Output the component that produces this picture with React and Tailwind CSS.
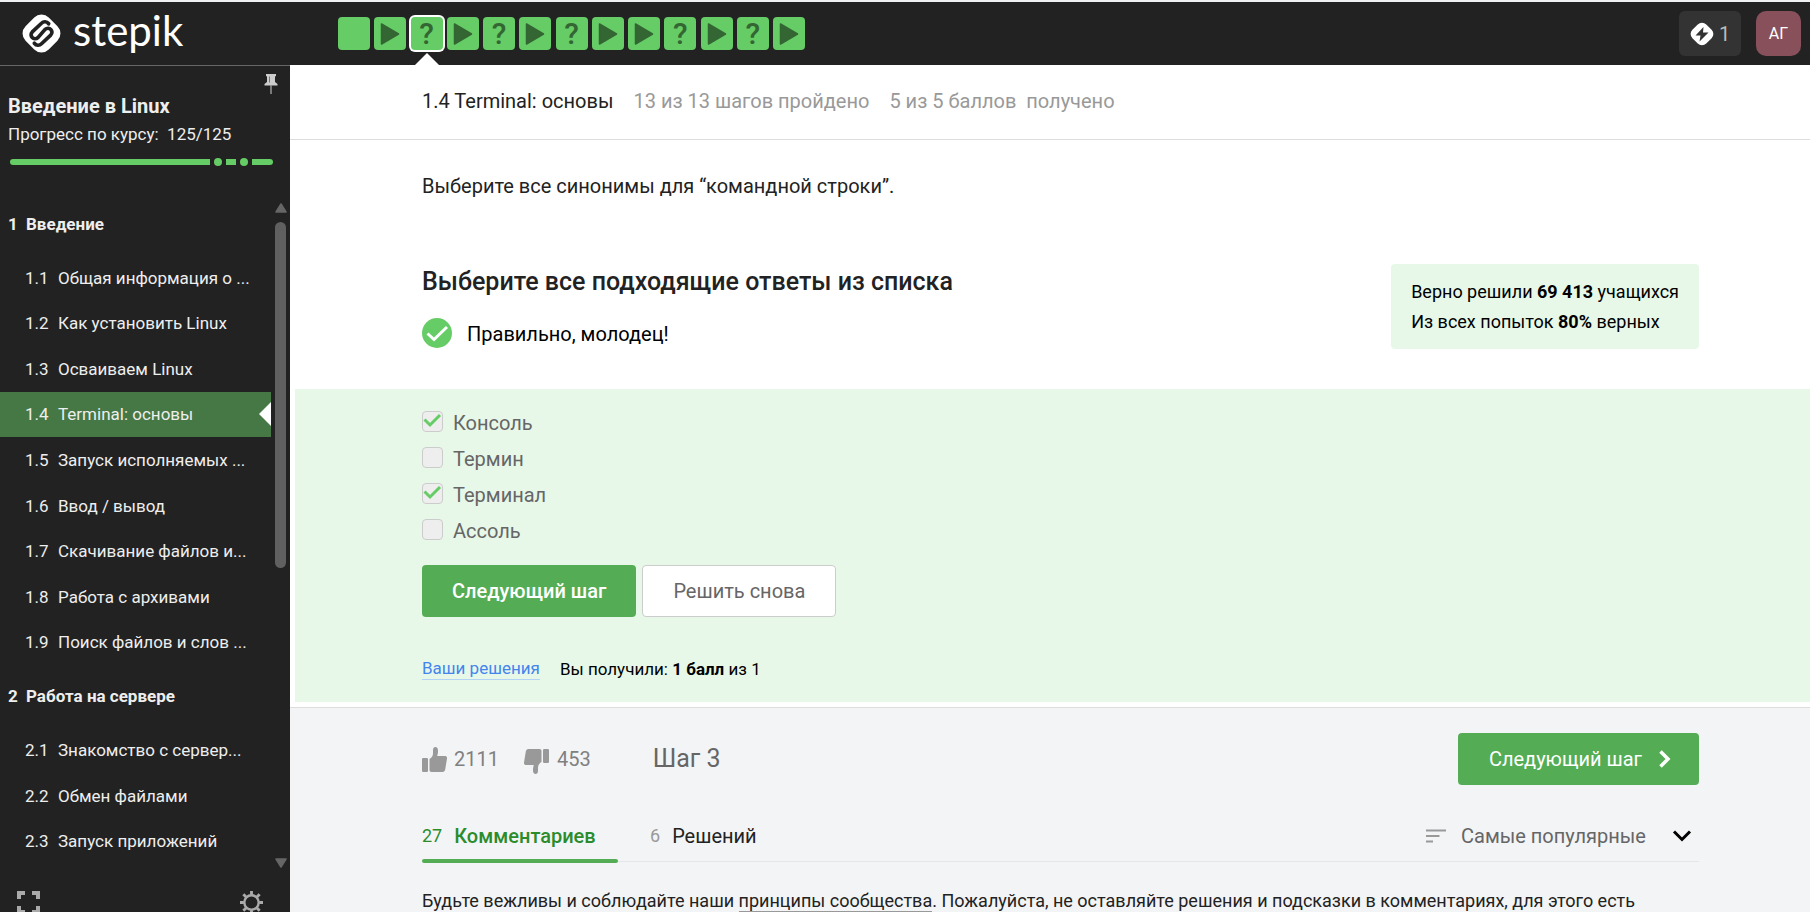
import React, { useState } from "react";

const steps = ["text", "video", "quiz", "video", "quiz", "video", "quiz", "video", "video", "quiz", "video", "quiz", "video"];

const sections = [
  {
    id: "1",
    title: "Введение",
    listClass: "h-[410px]",
    lessons: [
      ["1.1", "Общая информация о ..."],
      ["1.2", "Как установить Linux"],
      ["1.3", "Осваиваем Linux"],
      ["1.4", "Terminal: основы"],
      ["1.5", "Запуск исполняемых ..."],
      ["1.6", "Ввод / вывод"],
      ["1.7", "Скачивание файлов и..."],
      ["1.8", "Работа с архивами"],
      ["1.9", "Поиск файлов и слов ..."],
    ],
  },
  {
    id: "2",
    title: "Работа на сервере",
    listClass: "h-[137px]",
    lessons: [
      ["2.1", "Знакомство с сервер..."],
      ["2.2", "Обмен файлами"],
      ["2.3", "Запуск приложений"],
    ],
  },
];

function LogoMark() {
  return (
    <svg viewBox="0 0 40 40" className="size-[41px]" aria-hidden="true">
      <rect x="4" y="4" width="32" height="32" rx="10" transform="rotate(45 20 20)" fill="#fff" />
      <path
        d="M27 10.500C25 8 22 8 20 10L11 18.500C7.500 22 12.500 27.500 16.500 24L23.500 16C27.500 12.500 32.500 18 29 21.500L20 30C18 32 15 32 13 29.500"
        fill="none"
        stroke="#222"
        strokeWidth="3.600"
        strokeLinecap="round"
        strokeLinejoin="round"
      />
    </svg>
  );
}

function PlayIcon() {
  return (
    <svg viewBox="0 0 20 24" className="h-6 w-5" aria-hidden="true">
      <path d="M1.500 2v20L18.500 12z" fill="#363" stroke="#363" strokeWidth="1.500" strokeLinejoin="round" />
    </svg>
  );
}

function BoltIcon() {
  return (
    <svg viewBox="0 0 26 26" className="size-[26px]" aria-hidden="true">
      <rect x="3.200" y="3.200" width="19.600" height="19.600" rx="6" transform="rotate(45 13 13)" fill="#fff" />
      <path d="M14.500 6 6.500 14.500h5L10.500 20.500l9-9h-5.500z" fill="#333" />
    </svg>
  );
}

function ThumbIcon({ down }) {
  return (
    <svg viewBox="0 0 25 25" className={down ? "mt-1 size-[25px] rotate-180" : "size-[25px]"} aria-hidden="true">
      <rect x="0" y="11" width="6" height="14" rx="1.200" fill="#999" />
      <path
        d="M7.500 12c2-1 3.500-3 3.500-5.500V3C11 1 12 0 13.500 0S16 1.500 16 3.500c0 2.500-.3 4-.8 5.500h7.600c1.600 0 2.500 1 2.200 2.600l-1.800 11c-.3 1.500-1.200 2.400-2.600 2.400H9.500c-1.200 0-2-.8-2-2z"
        fill="#999"
      />
    </svg>
  );
}

function Lesson({ number, title, active }) {
  return (
    <li className={active ? "relative flex min-h-0 flex-1 bg-[#457844]" : "relative flex min-h-0 flex-1"}>
      <a href="#lesson" className="flex min-w-0 flex-1 items-center gap-2 pl-[25px]">
        <span className="w-[25px] shrink-0">{number}</span>
        <span className="whitespace-nowrap">{title}</span>
      </a>
      {active && (
        <svg viewBox="0 0 12 24" className="absolute top-1/2 right-0 h-6 w-3 -translate-y-1/2" aria-hidden="true">
          <path d="M12 0v24L0 12z" fill="#fff" />
        </svg>
      )}
    </li>
  );
}

function Sidebar() {
  return (
    <aside className="flex w-[290px] shrink-0 flex-col border-t border-[#666] bg-[#222] text-[17px] leading-6 text-[#eee]">
      <div className="flex justify-end pt-2 pr-3">
        <button type="button" aria-label="Закрепить" className="h-5">
          <svg viewBox="0 0 14 20" className="h-5 w-3.5" aria-hidden="true">
            <path d="M2 0h10v2l-1 .5V8l2.500 2v1.500H.5V10L3 8V2.500L2 2z" fill="#ccc" />
            <path d="M5.500 2.500v6" stroke="#777" />
            <path d="M7 11v9" stroke="#999" strokeWidth="1.500" />
          </svg>
        </button>
      </div>
      <div className="px-2">
        <h2 className="text-xl leading-6 font-bold">Введение в Linux</h2>
        <p className="mt-1 whitespace-pre">Прогресс по курсу:  125/125</p>
        <div className="mt-3 ml-0.5 flex items-center" role="img" aria-label="Прогресс">
          <span className="h-1.5 w-[200px] rounded-l-full bg-[#6c6]" />
          <span className="ml-1 size-2 rounded-full bg-[#6c6]" />
          <span className="ml-1 h-1.5 w-2.5 bg-[#6c6]" />
          <span className="ml-1 size-2 rounded-full bg-[#6c6]" />
          <span className="ml-1 h-1.5 w-[21px] rounded-r-full bg-[#6c6]" />
        </div>
      </div>
      <div className="mt-[27px] flex min-h-0 flex-1">
        <nav className="min-w-0 flex-1 overflow-hidden">
          {sections.map((section) => (
            <section key={section.id}>
              <h3 className="flex h-[62px] items-center gap-2 pl-2 font-bold">
                <span className="w-2.5">{section.id}</span>
                {section.title}
              </h3>
              <ul className={"flex flex-col " + section.listClass}>
                {section.lessons.map(([number, title]) => (
                  <Lesson key={number} number={number} title={title} active={number === "1.4"} />
                ))}
              </ul>
            </section>
          ))}
        </nav>
        <div className="flex w-[19px] flex-col items-center pt-2.5" aria-hidden="true">
          <svg viewBox="0 0 12 10" className="h-2.5 w-3">
            <path d="M6 1 11 9H1z" fill="#666" stroke="#666" strokeWidth="1.500" strokeLinejoin="round" />
          </svg>
          <div className="mt-[9px] h-[346px] w-[11px] rounded-full bg-[#606060]" />
          <svg viewBox="0 0 12 10" className="mt-auto h-2.5 w-3">
            <path d="M6 9 11 1H1z" fill="#666" stroke="#666" strokeWidth="1.500" strokeLinejoin="round" />
          </svg>
        </div>
      </div>
      <div className="flex h-11 shrink-0 items-start justify-between overflow-hidden pt-[23px] pr-[27px] pl-[17px]">
        <button type="button" aria-label="На весь экран">
          <svg viewBox="0 0 23 23" className="size-[23px]" fill="none" stroke="#aaa" strokeWidth="4" aria-hidden="true">
            <path d="M2 8V2h6M15 2h6v6M21 15v6h-6M8 21H2v-6" />
          </svg>
        </button>
        <button type="button" aria-label="Настройки">
          <svg viewBox="0 0 24 24" className="size-[23px]" fill="none" stroke="#aaa" aria-hidden="true">
            <circle cx="12" cy="12" r="7.500" strokeWidth="2.500" />
            <path
              d="M12 0v4M12 20v4M0 12h4M20 12h4M3.500 3.500l2.800 2.800M17.700 17.700l2.800 2.800M20.500 3.500l-2.800 2.800M6.300 17.700l-2.800 2.800"
              strokeWidth="3"
            />
          </svg>
        </button>
      </div>
    </aside>
  );
}

function Header() {
  return (
    <header className="flex h-[65px] shrink-0 items-center border-t-2 border-[#eef0f2] bg-[#222]">
      <a href="#home" aria-label="Stepik" className="flex w-[338px] shrink-0 items-center gap-[11px] pl-[21px] text-white">
        <LogoMark />
        <span className="pb-2 font-['Lato',sans-serif] text-[42px] leading-10">stepik</span>
      </a>
      <nav className="flex h-full w-[467px] items-center justify-between" aria-label="Шаги">
        {steps.map((kind, i) => (
          <a
            key={i}
            href={"#step-" + (i + 1)}
            aria-label={"Шаг " + (i + 1)}
            className={
              i === 2
                ? "relative flex h-[33px] w-8 items-center justify-center rounded bg-[#6c6] ring-2 ring-white"
                : "flex h-[33px] w-8 items-center justify-center rounded bg-[#6c6]"
            }
          >
            {kind === "video" && <PlayIcon />}
            {kind === "quiz" && <span className="text-[30px] leading-8 font-medium text-[#363]">?</span>}
            {i === 2 && (
              <svg viewBox="0 0 24 12" className="absolute top-9 left-1 h-3 w-6" aria-hidden="true">
                <path d="M0 12 12 0l12 12z" fill="#fff" />
              </svg>
            )}
          </a>
        ))}
      </nav>
      <div className="mr-[9px] ml-auto flex items-center gap-[15px]">
        <button type="button" className="flex h-[45px] w-[62px] items-center gap-1 rounded-md bg-[#333] pl-2.5 text-xl text-[#bbb]">
          <BoltIcon />1
        </button>
        <button type="button" className="size-[45px] rounded-[10px] bg-[#87505a] text-base text-white">
          АГ
        </button>
      </div>
    </header>
  );
}

function Choice({ label, initial }) {
  const [on, setOn] = useState(initial);
  return (
    <label className="flex h-9 items-start gap-2.5 pt-[7px] text-xl leading-6 text-[#666]">
      <span className="relative size-[21px] shrink-0">
        <input
          type="checkbox"
          checked={on}
          onChange={() => setOn(!on)}
          className="block size-[21px] appearance-none rounded border border-[#ccc] bg-[#eee]"
        />
        {on && (
          <svg viewBox="0 0 21 21" className="pointer-events-none absolute inset-0 size-[21px]" aria-hidden="true">
            <path d="M2.500 8.500 8 14l10-10" fill="none" stroke="#6c6" strokeWidth="3" />
          </svg>
        )}
      </span>
      {label}
    </label>
  );
}

export default function App() {
  return (
    <div className="flex h-screen flex-col overflow-hidden bg-white font-['Roboto',sans-serif] text-[#222]">
      <Header />
      <div className="flex min-h-0 flex-1">
        <Sidebar />
        <main className="flex min-w-0 flex-1 flex-col overflow-hidden">
          <div className="flex h-[75px] shrink-0 items-center gap-5 border-b border-[#ddd] pb-0.5 pl-[132px] text-xl text-[#999]">
            <h1 className="text-[#222]">1.4 Terminal: основы</h1>
            <span>13 из 13 шагов пройдено</span>
            <span className="whitespace-pre">5 из 5 баллов  получено</span>
          </div>

          <div className="flex h-[249px] shrink-0 flex-col pt-8 pr-[111px] pl-[132px]">
            <p className="text-xl leading-7">Выберите все синонимы для “командной строки”.</p>
            <div className="mt-16 flex items-start justify-between">
              <div>
                <h2 className="text-[25px] leading-9 font-medium">Выберите все подходящие ответы из списка</h2>
                <p className="mt-[18px] flex items-start gap-[15px] text-xl leading-8 text-black">
                  <svg viewBox="0 0 30 30" className="size-[30px]" aria-hidden="true">
                    <circle cx="15" cy="15" r="15" fill="#6c6" />
                    <path d="m5.500 15.500 6.500 6L25 9" fill="none" stroke="#fff" strokeWidth="3" />
                  </svg>
                  Правильно, молодец!
                </p>
              </div>
              <div className="rounded bg-[#e7f8e9] px-5 pt-[13px] pb-3 text-lg leading-[30px] text-black">
                <p>
                  Верно решили <b>69 413</b> учащихся
                </p>
                <p>
                  Из всех попыток <b>80%</b> верных
                </p>
              </div>
            </div>
          </div>

          <div className="ml-[5px] flex h-[313px] shrink-0 flex-col bg-[#e7f8e9] pt-[15px] pr-[111px] pl-[127px]">
            <Choice label="Консоль" initial />
            <Choice label="Термин" initial={false} />
            <Choice label="Терминал" initial />
            <Choice label="Ассоль" initial={false} />
            <div className="mt-[17px] flex gap-1.5">
              <button type="button" className="h-[52px] rounded bg-[#54ad54] px-[30px] text-xl font-medium text-white">
                Следующий шаг
              </button>
              <button type="button" className="h-[52px] rounded border border-[#ccc] bg-white px-[30px] text-xl text-[#666]">
                Решить снова
              </button>
            </div>
            <div className="mt-10 flex items-center gap-5 text-[17px] leading-[22px] text-black">
              <a href="#solutions" className="border-b border-[#b3d4f5] text-[#4485ed]">
                Ваши решения
              </a>
              <p>
                Вы получили: <b>1 балл</b> из 1
              </p>
            </div>
          </div>

          <div className="mt-[5px] flex-1 border-t border-[#ddd] bg-[#f3f4f6] pt-[25px] pr-[111px] pl-[132px]">
            <div className="flex items-center">
              <button type="button" className="flex items-center gap-[7px] text-xl text-[#808080]">
                <ThumbIcon />
                2111
              </button>
              <button type="button" className="ml-[25px] flex items-center gap-2 text-xl text-[#808080]">
                <ThumbIcon down />
                453
              </button>
              <span className="ml-[62px] text-[25px] text-[#666]">Шаг 3</span>
              <button
                type="button"
                className="ml-auto flex h-[52px] items-center gap-[17px] rounded bg-[#54ad54] pr-7 pl-[31px] text-xl text-white"
              >
                Следующий шаг
                <svg viewBox="0 0 12 18" className="h-[18px] w-3" fill="none" stroke="#fff" strokeWidth="3.500" aria-hidden="true">
                  <path d="m1.500 1.500 7.500 7.500-7.500 7.500" />
                </svg>
              </button>
            </div>
            <div className="mt-[25px] flex h-[52px] items-stretch border-b border-[#e5e6e8] text-xl">
              <button type="button" className="relative flex w-[196px] items-center gap-3 text-left text-[#2c8c2c]">
                <span className="text-lg">27</span>
                <span className="font-medium">Комментариев</span>
                <span className="absolute inset-x-0 -bottom-0.5 h-1 rounded-full bg-[#54ad54]" />
              </button>
              <button type="button" className="ml-8 flex items-center gap-3">
                <span className="text-lg text-[#999]">6</span>
                Решений
              </button>
              <label className="relative ml-auto flex items-center gap-[15px] text-[#666]">
                <svg viewBox="0 0 20 14" className="h-3.5 w-5" fill="none" stroke="#999" strokeWidth="2" aria-hidden="true">
                  <path d="M0 1.500h20M0 7h13.500M0 12.500h7" />
                </svg>
                <select aria-label="Сортировка" className="appearance-none bg-transparent pr-[53px]">
                  <option>Самые популярные</option>
                </select>
                <svg
                  viewBox="0 0 20 12"
                  className="pointer-events-none absolute right-[7px] h-3 w-5"
                  fill="none"
                  stroke="#000"
                  strokeWidth="3"
                  aria-hidden="true"
                >
                  <path d="m2 1.500 8 8 8-8" />
                </svg>
              </label>
            </div>
            <p className="mt-[27px] text-lg leading-6 whitespace-nowrap">
              Будьте вежливы и соблюдайте наши{" "}
              <a href="#rules" className="border-b border-[#999]">
                принципы сообщества
              </a>
              . Пожалуйста, не оставляйте решения и подсказки в комментариях, для этого есть
            </p>
          </div>
        </main>
      </div>
    </div>
  );
}
